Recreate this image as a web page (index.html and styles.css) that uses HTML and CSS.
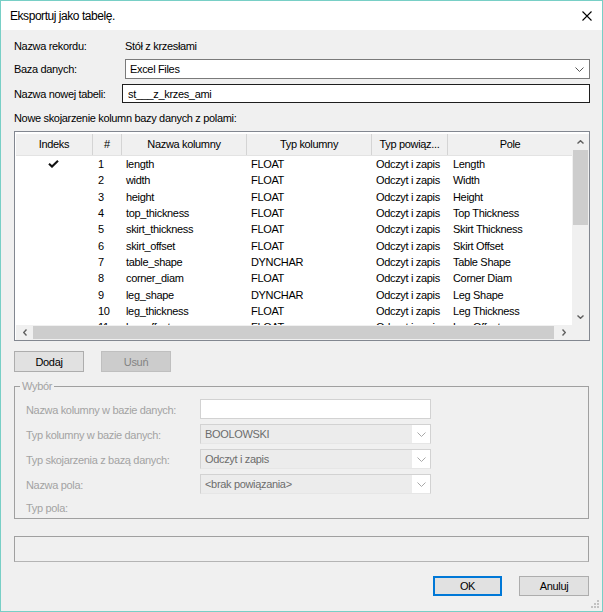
FILE: index.html
```html
<!DOCTYPE html>
<html lang="pl">
<head>
<meta charset="utf-8">
<title>Eksportuj jako tabelę.</title>
<link rel="stylesheet" href="styles.css">
</head>
<body>
<div class="window">
  <div class="titlebar">
    <span class="title">Eksportuj jako tabelę.</span>
    <svg class="close" width="10" height="10" viewBox="0 0 10 10"><path d="M0.5 0.5 L9.5 9.5 M9.5 0.5 L0.5 9.5" stroke="#000" stroke-width="1.1" fill="none"/></svg>
  </div>
  <div class="content">
    <div class="row r1"><span class="label w111">Nazwa rekordu:</span><span>Stół z krzesłami</span></div>
    <div class="row r2">
      <span class="label w111">Baza danych:</span>
      <div class="combo"><span class="combo-text">Excel Files</span>
        <svg class="chev" width="9" height="5" viewBox="0 0 9 5"><polyline points="0.5,0.5 4.5,4.5 8.5,0.5" fill="none" stroke="#555" stroke-width="1"/></svg>
      </div>
    </div>
    <div class="row r3">
      <span class="label w108">Nazwa nowej tabeli:</span>
      <div class="textbox">st___z_krzes_ami</div>
    </div>
    <div class="caption">Nowe skojarzenie kolumn bazy danych z polami:</div>

    <div class="list">
      <div class="view">
        <div class="lrow head">
          <div class="hc">Indeks</div>
          <div class="hc">#</div>
          <div class="hc">Nazwa kolumny</div>
          <div class="hc">Typ kolumny</div>
          <div class="hc">Typ powiąz...</div>
          <div class="hc last">Pole</div>
        </div>
        <div class="lrow">
          <div class="c idx"><svg width="11" height="8" viewBox="0 0 11 8"><polyline points="1,3.8 4,6.6 10,0.8" fill="none" stroke="#111" stroke-width="2.1"/></svg></div>
          <div class="c num">1</div><div class="c">length</div><div class="c">FLOAT</div><div class="c">Odczyt i zapis</div><div class="c pole">Length</div>
        </div>
        <div class="lrow"><div class="c idx"></div><div class="c num">2</div><div class="c">width</div><div class="c">FLOAT</div><div class="c">Odczyt i zapis</div><div class="c pole">Width</div></div>
        <div class="lrow"><div class="c idx"></div><div class="c num">3</div><div class="c">height</div><div class="c">FLOAT</div><div class="c">Odczyt i zapis</div><div class="c pole">Height</div></div>
        <div class="lrow"><div class="c idx"></div><div class="c num">4</div><div class="c">top_thickness</div><div class="c">FLOAT</div><div class="c">Odczyt i zapis</div><div class="c pole">Top Thickness</div></div>
        <div class="lrow"><div class="c idx"></div><div class="c num">5</div><div class="c">skirt_thickness</div><div class="c">FLOAT</div><div class="c">Odczyt i zapis</div><div class="c pole">Skirt Thickness</div></div>
        <div class="lrow"><div class="c idx"></div><div class="c num">6</div><div class="c">skirt_offset</div><div class="c">FLOAT</div><div class="c">Odczyt i zapis</div><div class="c pole">Skirt Offset</div></div>
        <div class="lrow"><div class="c idx"></div><div class="c num">7</div><div class="c">table_shape</div><div class="c">DYNCHAR</div><div class="c">Odczyt i zapis</div><div class="c pole">Table Shape</div></div>
        <div class="lrow"><div class="c idx"></div><div class="c num">8</div><div class="c">corner_diam</div><div class="c">FLOAT</div><div class="c">Odczyt i zapis</div><div class="c pole">Corner Diam</div></div>
        <div class="lrow"><div class="c idx"></div><div class="c num">9</div><div class="c">leg_shape</div><div class="c">DYNCHAR</div><div class="c">Odczyt i zapis</div><div class="c pole">Leg Shape</div></div>
        <div class="lrow"><div class="c idx"></div><div class="c num">10</div><div class="c">leg_thickness</div><div class="c">FLOAT</div><div class="c">Odczyt i zapis</div><div class="c pole">Leg Thickness</div></div>
        <div class="lrow"><div class="c idx"></div><div class="c num">11</div><div class="c">leg_offset</div><div class="c">FLOAT</div><div class="c">Odczyt i zapis</div><div class="c pole">Leg Offset</div></div>
      </div>
      <div class="vscroll">
        <div class="sb-btn v-up"><svg width="7" height="4" viewBox="0 0 7 4"><polyline points="0.5,3.5 3.5,0.7 6.5,3.5" fill="none" stroke="#606060" stroke-width="1.4"/></svg></div>
        <div class="v-track"><div class="v-thumb"></div></div>
        <div class="sb-btn v-down"><svg width="7" height="4" viewBox="0 0 7 4"><polyline points="0.5,0.5 3.5,3.3 6.5,0.5" fill="none" stroke="#606060" stroke-width="1.4"/></svg></div>
      </div>
      <div class="hscroll">
        <div class="sb-btn h-btn"><svg width="4" height="7" viewBox="0 0 4 7"><polyline points="3.5,0.5 0.7,3.5 3.5,6.5" fill="none" stroke="#606060" stroke-width="1.4"/></svg></div>
        <div class="h-thumb"></div>
        <div class="sb-btn h-btn"><svg width="4" height="7" viewBox="0 0 4 7"><polyline points="0.5,0.5 3.3,3.5 0.5,6.5" fill="none" stroke="#606060" stroke-width="1.4"/></svg></div>
      </div>
      <div class="corner"></div>
    </div>

    <div class="btnrow">
      <div class="btn">Dodaj</div>
      <div class="btn disabled">Usuń</div>
    </div>

    <fieldset class="group">
      <legend>Wybór</legend>
      <div class="gform">
        <span class="glabel">Nazwa kolumny w bazie danych:</span>
        <div class="gfield gtext"></div>
        <span class="glabel">Typ kolumny w bazie danych:</span>
        <div class="gfield gcombo"><span class="gval">BOOLOWSKI</span><span class="gbtn"><svg width="9" height="5" viewBox="0 0 9 5"><polyline points="0.5,0.5 4.5,4.5 8.5,0.5" fill="none" stroke="#a8a8a8" stroke-width="1"/></svg></span></div>
        <span class="glabel">Typ skojarzenia z bazą danych:</span>
        <div class="gfield gcombo"><span class="gval">Odczyt i zapis</span><span class="gbtn"><svg width="9" height="5" viewBox="0 0 9 5"><polyline points="0.5,0.5 4.5,4.5 8.5,0.5" fill="none" stroke="#a8a8a8" stroke-width="1"/></svg></span></div>
        <span class="glabel">Nazwa pola:</span>
        <div class="gfield gcombo"><span class="gval">&lt;brak powiązania&gt;</span><span class="gbtn"><svg width="9" height="5" viewBox="0 0 9 5"><polyline points="0.5,0.5 4.5,4.5 8.5,0.5" fill="none" stroke="#a8a8a8" stroke-width="1"/></svg></span></div>
        <span class="glabel last">Typ pola:</span>
        <span class="last"></span>
      </div>
    </fieldset>

    <div class="status"></div>

    <div class="footer">
      <div class="btn default">OK</div>
      <div class="btn">Anuluj</div>
    </div>

    <svg class="grip" width="8" height="8" viewBox="0 0 8 8">
      <rect x="6" y="0" width="2" height="2" fill="#c2c2c2"/>
      <rect x="3" y="3" width="2" height="2" fill="#c2c2c2"/>
      <rect x="6" y="3" width="2" height="2" fill="#c2c2c2"/>
      <rect x="0" y="6" width="2" height="2" fill="#c2c2c2"/>
      <rect x="3" y="6" width="2" height="2" fill="#c2c2c2"/>
      <rect x="6" y="6" width="2" height="2" fill="#c2c2c2"/>
    </svg>
  </div>
</div>
</body>
</html>
```

FILE: styles.css
```css
* { box-sizing: border-box; }
html, body { margin: 0; padding: 0; }
body {
  width: 603px;
  height: 612px;
  overflow: hidden;
  font-family: "Liberation Sans", Arial, sans-serif;
  font-size: 11px;
  letter-spacing: -0.33px;
  color: #000;
  background: #f0f0f0;
}
.window {
  width: 603px;
  height: 612px;
  border: 1px solid #78cfc6;
  display: flex;
  flex-direction: column;
  background: #f0f0f0;
}
.titlebar {
  flex: none;
  height: 29px;
  background: #fff;
  display: flex;
  align-items: center;
  justify-content: space-between;
  padding: 0 10px 0 9px;
}
.title { font-size: 12px; letter-spacing: -0.45px; padding-top: 1px; }
.close { display: block; }

.content {
  flex: 1;
  position: relative;
  display: flex;
  flex-direction: column;
  padding: 8px 12px 0 13px;
}
.row { display: flex; align-items: center; }
.r1 { height: 16px; }
.r2 { height: 20px; margin-top: 5px; }
.r3 { height: 19px; margin-top: 5px; }
.label { flex: none; }
.w111 { width: 111px; }
.w108 { width: 108px; }
.combo {
  flex: 1;
  height: 20px;
  background: #fff;
  border: 1px solid #7a7a7a;
  display: flex;
  align-items: center;
  justify-content: space-between;
  padding: 0 5px 0 4px;
}
.chev { display: block; }
.textbox {
  flex: 1;
  height: 19px;
  background: #fff;
  border: 1px solid #1e1e1e;
  display: flex;
  align-items: center;
  padding-left: 5px;
}
.caption { margin-top: 8px; line-height: 14px; height: 14px; }

.list {
  margin-top: 6px;
  height: 210px;
  border: 1px solid #828790;
  background: #fff;
  padding: 2px 0 0 1px;
  display: grid;
  grid-template-columns: 1fr 17px;
  grid-template-rows: 1fr 15px;
}
.view { overflow: hidden; }
.lrow {
  display: grid;
  grid-template-columns: 77px 29px 125px 125px 76px 124px;
  height: 16.33px;
  line-height: 16.33px;
  white-space: nowrap;
}
.lrow.head {
  height: 22px;
  line-height: 21px;
  background: #f0f0f0;
  border-bottom: 1px solid #e3e3e3;
}
.hc {
  text-align: center;
  border-right: 1px solid #d4d4d4;
  overflow: hidden;
}
.hc.last { border-right: none; }
.c { padding-left: 4px; overflow: hidden; }
.c.num { padding-left: 5px; }
.c.pole { padding-left: 5px; }
.c.idx { display: flex; align-items: center; justify-content: center; padding-left: 0; padding-right: 2px; }
.c.idx svg { display: block; }

.vscroll {
  background: #f0f0f0;
  display: flex;
  flex-direction: column;
}
.sb-btn { display: flex; align-items: center; justify-content: center; flex: none; }
.sb-btn svg { display: block; }
.v-up { height: 16px; }
.v-down { height: 17px; }
.v-track { flex: 1; padding: 0 1px; }
.v-thumb { height: 75px; background: #cdcdcd; }
.hscroll {
  background: #f0f0f0;
  display: flex;
}
.h-btn { width: 17px; }
.h-thumb { flex: 1; margin: 1px 1px 1px 0; background: #cdcdcd; }
.corner { background: #f0f0f0; }

.btn {
  height: 21px;
  width: 70px;
  background: #e1e1e1;
  border: 1px solid #adadad;
  display: flex;
  align-items: center;
  justify-content: center;
}
.btn.disabled { background: #cccccc; border-color: #bfbfbf; color: #838383; }
.btn.default { border: 2px solid #0078d7; width: 69px; }
.btnrow { display: flex; gap: 17px; margin-top: 10px; }

.group {
  margin: 7px 1px 0 0;
  padding: 0 0 3px 11px;
  border: 1px solid #a0a0a0;
  min-width: 0;
}
.group legend {
  margin-left: -6px;
  padding: 0 2px;
  line-height: 14px;
  color: #a3a3a3;
}
.gform {
  margin-top: 6px;
  display: grid;
  grid-template-columns: 174px 231px;
  grid-template-rows: 20px 20px 20px 20px 16px;
  row-gap: 5px;
  align-items: center;
}
.glabel { color: #a3a3a3; padding-top: 2px; }
.gfield { height: 20px; border: 1px solid #d2d2d2; }
.gtext { background: #fff; }
.gcombo {
  background: #ececec;
  display: flex;
  align-items: center;
  justify-content: space-between;
  border-bottom-color: #e6e6e6;
}
.gval { color: #6d6d6d; padding-left: 4px; }
.gbtn {
  width: 18px;
  align-self: stretch;
  background: #fff;
  display: flex;
  align-items: center;
  justify-content: center;
}
.gbtn svg { display: block; }

.status {
  margin: 17px 1px 0 0;
  height: 26px;
  border: 1px solid #a0a0a0;
  border-bottom-color: #b4b4b4;
}
.footer {
  margin-top: 14px;
  display: flex;
  justify-content: flex-end;
  gap: 17px;
  padding-right: 1px;
}
.footer .btn { height: 20px; }
.grip { position: absolute; right: 3px; bottom: 3px; display: block; }
```
